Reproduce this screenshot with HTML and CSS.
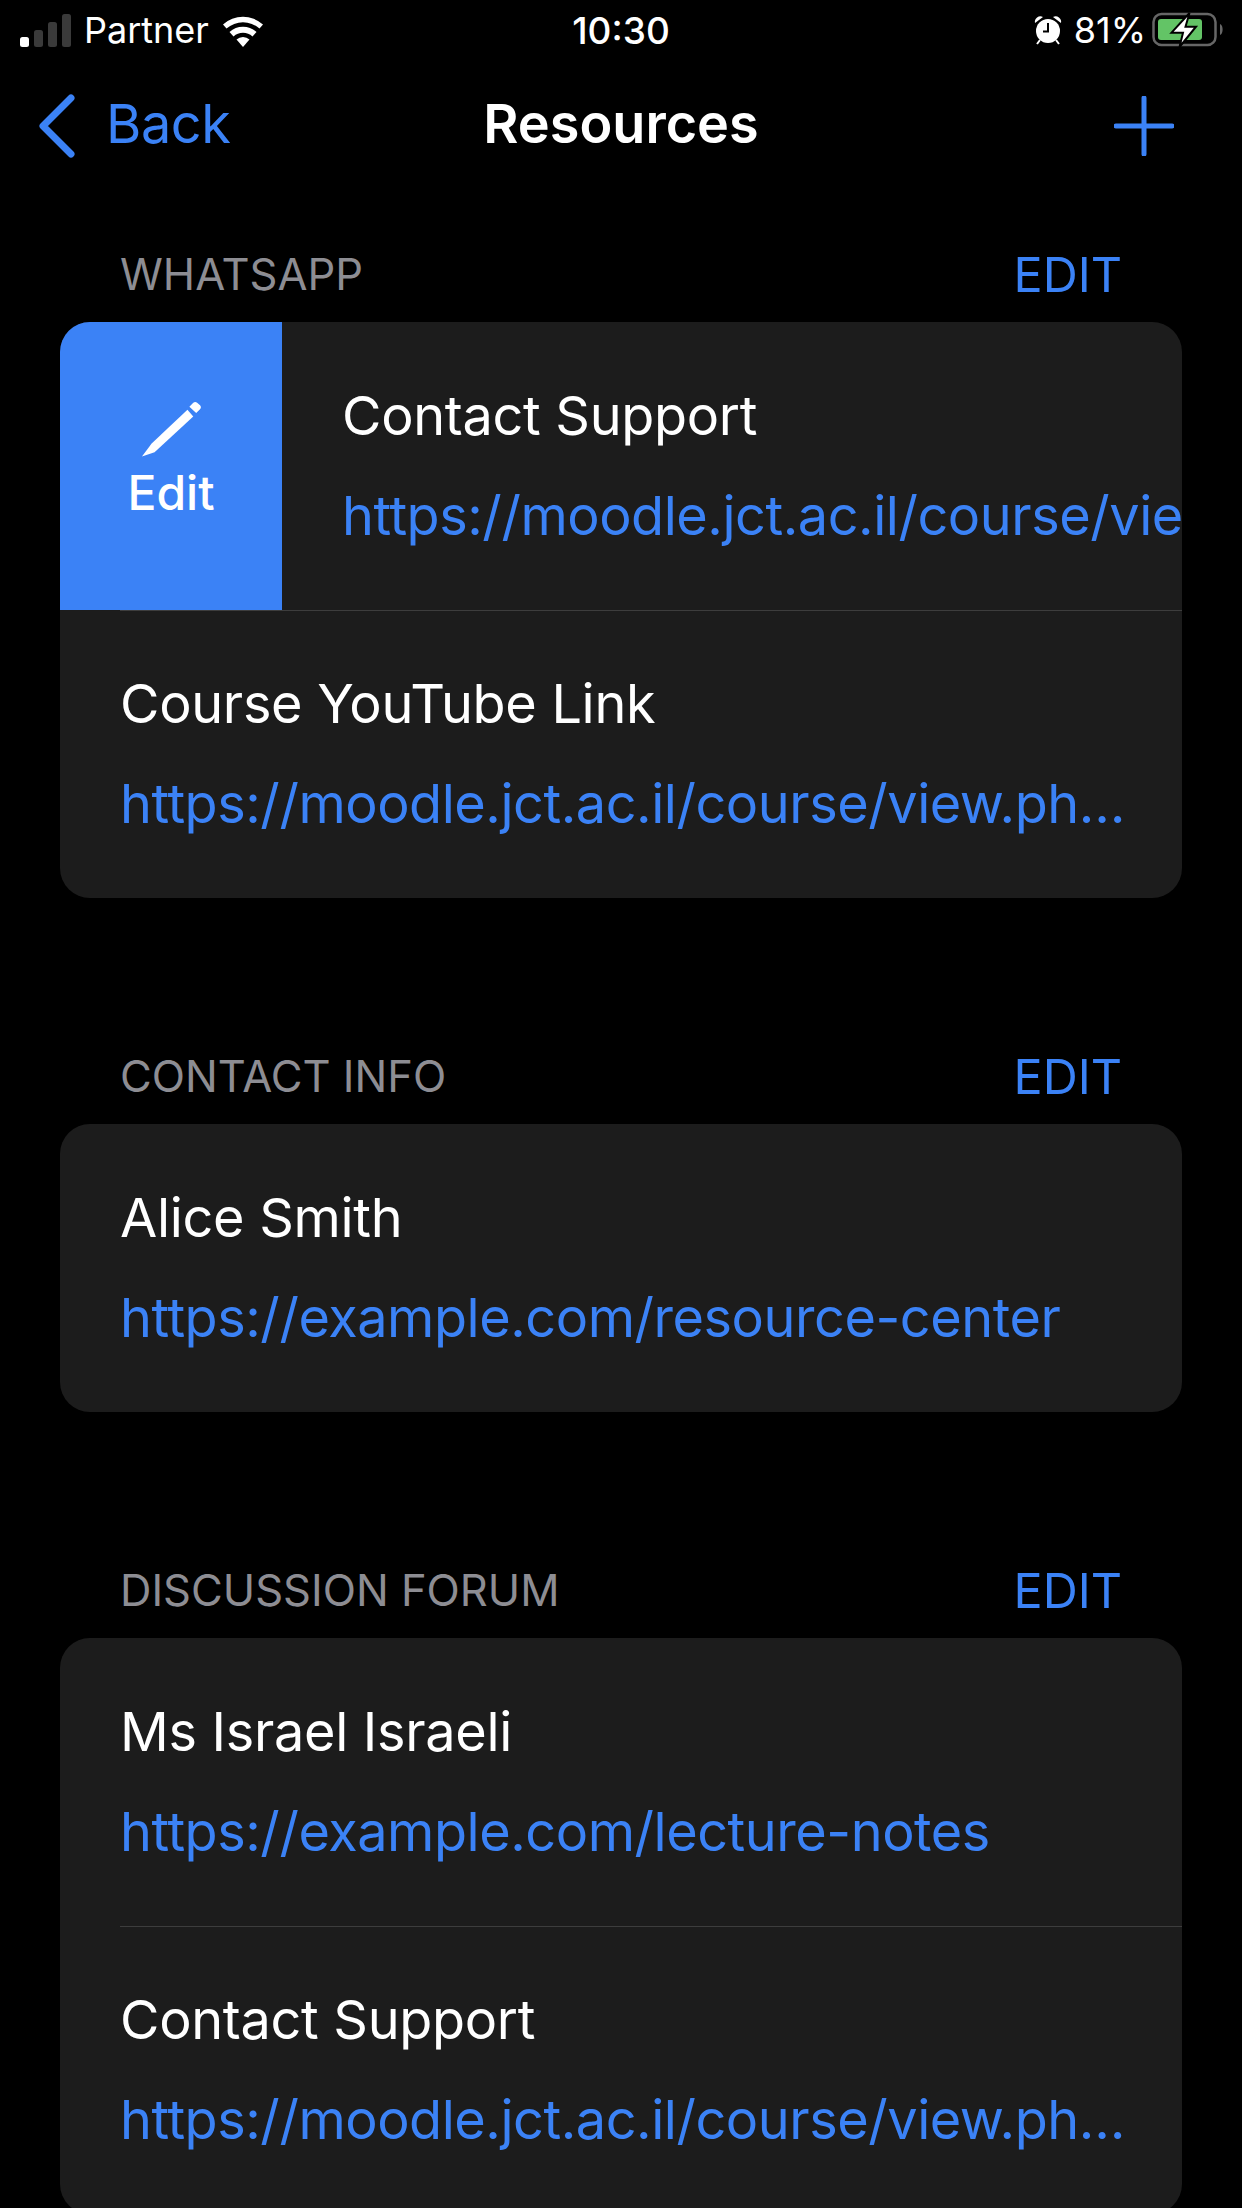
FILE: index.html
```html
<!DOCTYPE html>
<html lang="en">
<head>
    <meta charset="UTF-8">
    <meta name="viewport" content="width=device-width, initial-scale=1.0">
    <title>Resources</title>
    <link rel="stylesheet" href="styles.css">
</head>
<body>
    <div class="status-bar">
        <div class="status-left">
            <svg class="signal" width="54" height="33" viewBox="0 0 54 33">
                <rect x="0" y="23" width="9" height="10" rx="2.5" fill="#fff"/>
                <rect x="14" y="16" width="9" height="17" rx="2.5" fill="#3a3a3a"/>
                <rect x="28" y="8" width="9" height="25" rx="2.5" fill="#3a3a3a"/>
                <rect x="42" y="0" width="9" height="33" rx="2.5" fill="#3a3a3a"/>
            </svg>
            <span class="carrier">Partner</span>
            <svg class="wifi" width="40" height="33" viewBox="0 0 40 33">
                <path d="M20 33l-6.500-7.500a9.500 9.500 0 0 1 13 0z" fill="#fff"/>
                <path d="M10.500 22.500l-4-4.500a20 20 0 0 1 27 0l-4 4.500a14 14 0 0 0-19 0z" fill="#fff"/>
                <path d="M3.500 14.500L0 10.500a30 30 0 0 1 40 0l-3.500 4a25 25 0 0 0-33 0z" fill="#fff"/>
            </svg>
        </div>
        <div class="status-time">10:30</div>
        <div class="status-right">
            <svg class="alarm" width="28" height="30" viewBox="0 0 28 30">
                <circle cx="14" cy="16" r="12" fill="#fff"/>
                <path d="M1 8a5.500 5.500 0 0 1 8-6zM27 8a5.500 5.500 0 0 0-8-6z" fill="#fff"/>
                <path d="M6 25l-3 4M22 25l3 4" stroke="#fff" stroke-width="2"/>
                <path d="M14 8v8.500H9" stroke="#000" stroke-width="2" fill="none"/>
            </svg>
            <span class="battery-text">81%</span>
            <svg class="battery" width="74" height="36" viewBox="0 0 74 36">
                <rect x="1.500" y="2" width="62" height="31" rx="8" fill="none" stroke="#666" stroke-width="2.500"/>
                <rect x="6" y="7" width="44" height="21" rx="3" fill="#63c466"/>
                <path d="M68 12c3.500 1 3.500 10 0 11z" fill="#666"/>
                <path d="M37.500 1L19.500 20.700H31L27.500 35 44 14.700H33.500z" fill="#fff" stroke="#000" stroke-width="2"/>
            </svg>
        </div>
    </div>

    <div class="nav-bar">
        <div class="nav-back">
            <svg width="40" height="64" viewBox="0 0 40 64">
                <path d="M33 4L5 32l28 28" fill="none" stroke="#3b82f6" stroke-width="7" stroke-linecap="round" stroke-linejoin="round"/>
            </svg>
            <span>Back</span>
        </div>
        <div class="nav-title">Resources</div>
        <svg class="nav-add" width="60" height="60" viewBox="0 0 60 60">
            <path d="M30 2v56M2 30h56" stroke="#3b82f6" stroke-width="5" stroke-linecap="round"/>
        </svg>
    </div>

    <div class="section first">
        <div class="section-head">
            <span class="section-name">WHATSAPP</span>
            <span class="section-edit">EDIT</span>
        </div>
        <div class="card">
            <div class="row swiped">
                <div class="edit-action">
                    <svg width="60" height="58" viewBox="0 0 62 58">
                        <path d="M47 9L10 44 0 57.500l13-4.500 40-37z" fill="#fff" transform="translate(1 0)"/>
                        <path d="M50 6l4-4a3 3 0 0 1 4 0l3 2.500a3 3 0 0 1 0 4l-4 4z" fill="#fff"/>
                    </svg>
                    <span>Edit</span>
                </div>
                <div class="row-text">
                    <div class="row-title">Contact Support</div>
                    <div class="row-link">https://moodle.jct.ac.il/course/view.php?id=1024</div>
                </div>
            </div>
            <div class="row">
                <div class="row-text">
                    <div class="row-title">Course YouTube Link</div>
                    <div class="row-link ellipsis">https://moodle.jct.ac.il/course/view.php?id=1024</div>
                </div>
            </div>
        </div>
    </div>

    <div class="section">
        <div class="section-head">
            <span class="section-name">CONTACT INFO</span>
            <span class="section-edit">EDIT</span>
        </div>
        <div class="card">
            <div class="row">
                <div class="row-text">
                    <div class="row-title">Alice Smith</div>
                    <div class="row-link ellipsis">https://example.com/resource-center</div>
                </div>
            </div>
        </div>
    </div>

    <div class="section">
        <div class="section-head">
            <span class="section-name">DISCUSSION FORUM</span>
            <span class="section-edit">EDIT</span>
        </div>
        <div class="card">
            <div class="row">
                <div class="row-text">
                    <div class="row-title">Ms Israel Israeli</div>
                    <div class="row-link ellipsis">https://example.com/lecture-notes</div>
                </div>
            </div>
            <div class="row">
                <div class="row-text">
                    <div class="row-title">Contact Support</div>
                    <div class="row-link ellipsis">https://moodle.jct.ac.il/course/view.php?id=1024</div>
                </div>
            </div>
        </div>
    </div>
</body>
</html>
```

FILE: styles.css
```css
html, body {
    height: 2208px;
    overflow: hidden;
}

body {
    margin: 0;
    background: #000;
    color: #fff;
    font-family: Inter, "Liberation Sans", sans-serif;
}

.status-bar {
    display: flex;
    justify-content: space-between;
    align-items: center;
    height: 60px;
    padding: 0 16px 0 20px;
    position: relative;
    font-size: 36px;
}

.status-left, .status-right {
    display: flex;
    align-items: center;
}

.carrier {
    margin-left: 10px;
}

.wifi {
    margin-left: 14px;
}

.status-time {
    position: absolute;
    left: 0;
    right: 0;
    text-align: center;
    font-size: 37px;
    font-weight: 500;
}

.alarm {
    margin-right: 12px;
}

.battery {
    margin-left: 6px;
}

.nav-bar {
    display: flex;
    align-items: center;
    justify-content: space-between;
    height: 132px;
    padding: 0 68px 0 38px;
    position: relative;
}

.nav-back {
    display: flex;
    align-items: center;
    gap: 28px;
    color: #3b82f6;
    font-size: 54px;
}

.nav-back span {
    margin-bottom: 5px;
    letter-spacing: -0.4px;
}

.nav-title {
    position: absolute;
    left: 0;
    right: 0;
    margin-bottom: 5px;
    text-align: center;
    font-size: 54px;
    font-weight: 600;
}

.section {
    padding: 0 60px;
    margin-top: 120px;
}

.section.first {
    margin-top: 24px;
}

.section-head {
    display: flex;
    justify-content: space-between;
    align-items: center;
    height: 106px;
    box-sizing: border-box;
    padding: 10px 60px 0;
}

.section-name {
    color: #8d8d93;
    font-size: 43.5px;
}

.section-edit {
    color: #3b82f6;
    font-size: 48.5px;
}

.card {
    background: #1c1c1c;
    border-radius: 30px;
    overflow: hidden;
}

.row {
    display: flex;
    height: 288px;
    position: relative;
}

.row + .row::before {
    content: "";
    position: absolute;
    left: 60px;
    right: 0;
    top: 0;
    height: 1px;
    background: #3d3d3d;
}

.edit-action {
    flex: none;
    width: 222px;
    padding-bottom: 10px;
    box-sizing: border-box;
    background: #3b82f6;
    display: flex;
    flex-direction: column;
    align-items: center;
    justify-content: center;
    gap: 5px;
    font-size: 48px;
    font-weight: 500;
}

.row-text {
    flex: 1;
    min-width: 0;
    padding: 0 54px 0 60px;
    display: flex;
    flex-direction: column;
    justify-content: center;
    gap: 36px;
}

.row-title {
    font-size: 54px;
    line-height: 64px;
    letter-spacing: -0.3px;
}

.row-link {
    color: #3b82f6;
    font-size: 54px;
    line-height: 64px;
    letter-spacing: -0.45px;
    white-space: nowrap;
}

.ellipsis {
    overflow: hidden;
    text-overflow: ellipsis;
}
```
